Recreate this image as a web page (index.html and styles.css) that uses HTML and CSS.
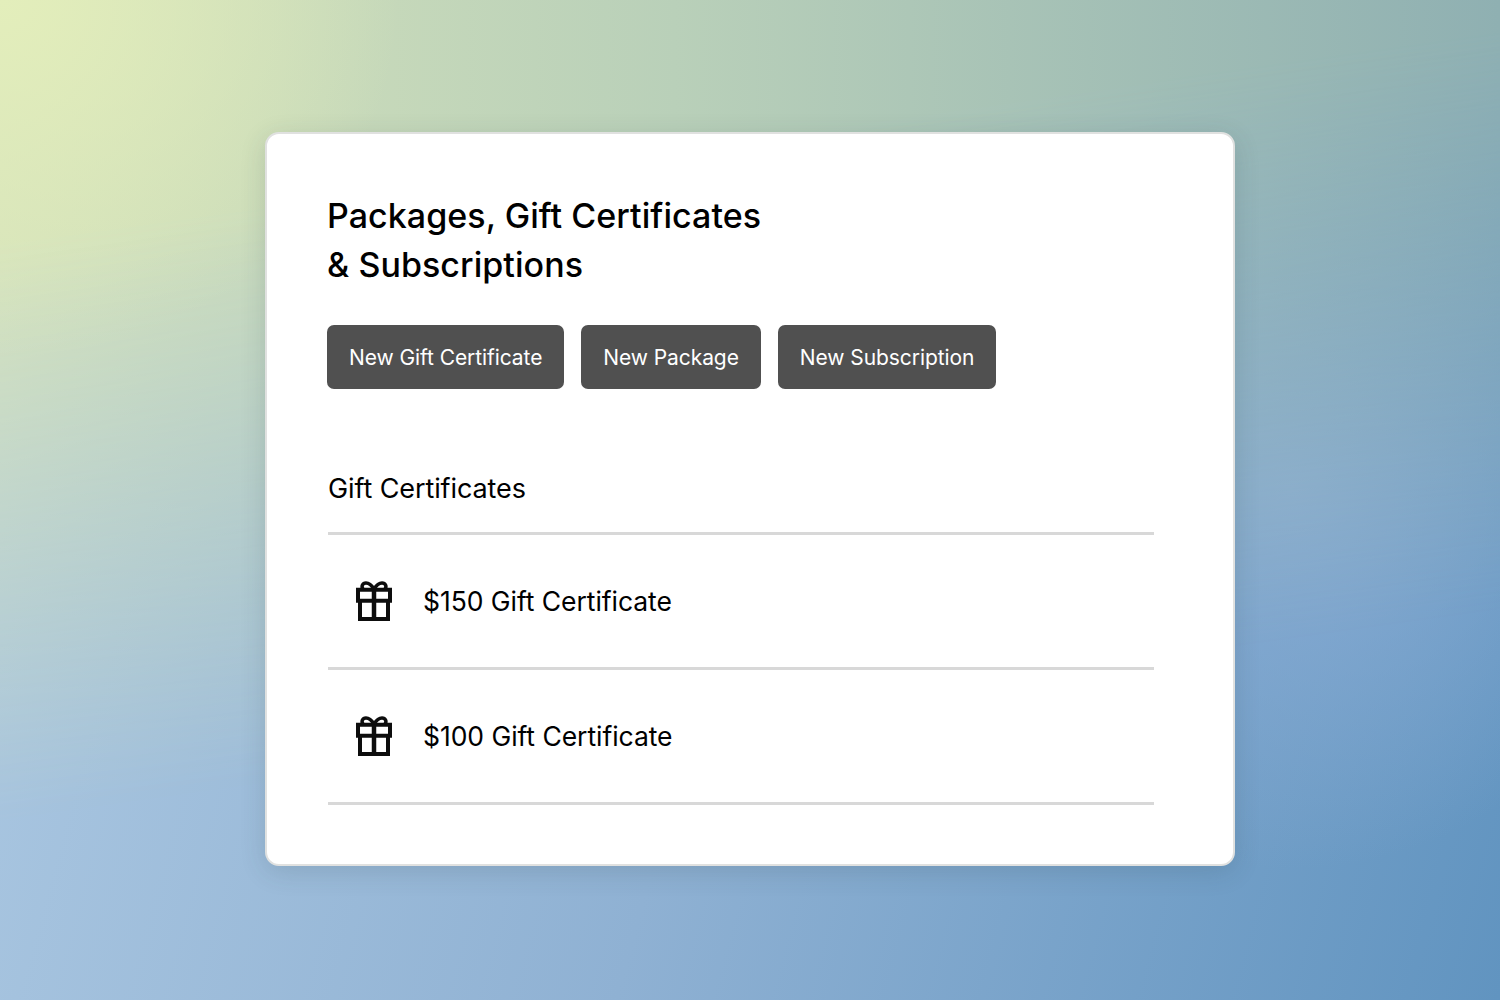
FILE: index.html
```html
<!DOCTYPE html>
<html lang="en">
<head>
    <meta charset="UTF-8">
    <title>Packages, Gift Certificates &amp; Subscriptions</title>
    <link rel="stylesheet" href="styles.css">
</head>
<body>
    <div class="card">
        <h1>Packages, Gift Certificates<br>&amp; Subscriptions</h1>
        <div class="actions">
            <button class="btn">New Gift Certificate</button>
            <button class="btn">New Package</button>
            <button class="btn">New Subscription</button>
        </div>
        <h2>Gift Certificates</h2>
        <ul class="list">
            <li class="row">
                <svg class="gift" viewBox="0 0 36 40" fill="none" stroke="#0d0d0d" stroke-width="4">
                    <path d="M2 8.700H34V19.700H2Z"/>
                    <path d="M4 19.700V38H32V19.700"/>
                    <path d="M18 8.700V38" stroke-width="4.500"/>
                    <path d="M18 8C15.500 4 12.500 2 10 2C6.500 2 5 5.500 7 8" stroke-width="3.500"/>
                    <path d="M18 8C20.500 4 23.500 2 26 2C29.500 2 31 5.500 29 8" stroke-width="3.500"/>
                </svg>
                <span>$150 Gift Certificate</span>
            </li>
            <li class="row">
                <svg class="gift" viewBox="0 0 36 40" fill="none" stroke="#0d0d0d" stroke-width="4">
                    <path d="M2 8.700H34V19.700H2Z"/>
                    <path d="M4 19.700V38H32V19.700"/>
                    <path d="M18 8.700V38" stroke-width="4.500"/>
                    <path d="M18 8C15.500 4 12.500 2 10 2C6.500 2 5 5.500 7 8" stroke-width="3.500"/>
                    <path d="M18 8C20.500 4 23.500 2 26 2C29.500 2 31 5.500 29 8" stroke-width="3.500"/>
                </svg>
                <span>$100 Gift Certificate</span>
            </li>
        </ul>
    </div>
</body>
</html>
```
FILE: styles.css
```css
* {
    box-sizing: border-box;
    margin: 0;
    padding: 0;
    font-family: 'Inter', 'Liberation Sans', sans-serif;
}

body {
    height: 1000px;
    display: flex;
    justify-content: center;
    align-items: center;
    overflow: hidden;
    background:
        radial-gradient(380px 380px at 1290px 490px, #87abd3 0%, rgba(135, 171, 211, 0) 100%),
        linear-gradient(105deg, #aecae3 0%, #8fb1d3 50%, #6194c0 100%);
}

/* top half of the backdrop, faded into the blue one below */
body::before {
    content: '';
    position: absolute;
    left: 0;
    top: 0;
    width: 100%;
    height: 100%;
    background:
        radial-gradient(400px 360px at 0 0, #e3eebb 0%, rgba(227, 238, 187, 0) 100%),
        linear-gradient(to right, #d6e3bb 0%, #b9d0b9 45%, #8fb0b2 100%);
    -webkit-mask-image: linear-gradient(172deg, #000 0%, #000 20%, transparent 68%);
    mask-image: linear-gradient(172deg, #000 0%, #000 20%, transparent 68%);
}

.card {
    position: relative;
    width: 970px;
    height: 734px;
    margin-bottom: 2px;
    padding: 58px 79px 0 60px;
    background: #fff;
    border: 2px solid #e0e1e0;
    border-radius: 14px;
    box-shadow: 0 6px 26px rgba(40, 60, 70, 0.16);
}

h1 {
    font-size: 34px;
    line-height: 48.500px;
    font-weight: 500;
    letter-spacing: 0.05px;
    color: #000;
}

.actions {
    display: flex;
    gap: 17px;
    margin-top: 36px;
}

.btn {
    height: 64px;
    padding: 0 22px;
    background: #505050;
    color: #fff;
    border: none;
    border-radius: 7px;
    font-size: 21px;
    letter-spacing: -0.08px;
}

h2 {
    margin: 84px 0 0 1px;
    font-size: 27px;
    line-height: 32px;
    font-weight: 400;
    letter-spacing: -0.1px;
    color: #000;
}

.list {
    list-style: none;
    margin: 27px 0 0 1px;
    border-top: 3px solid #d8d8d8;
}

.row {
    height: 135px;
    display: flex;
    align-items: center;
    gap: 31px;
    padding-left: 28px;
    border-bottom: 3px solid #d8d8d8;
    font-size: 26.500px;
    letter-spacing: -0.05px;
    color: #000;
}

.gift {
    width: 36px;
    height: 40px;
}
```
